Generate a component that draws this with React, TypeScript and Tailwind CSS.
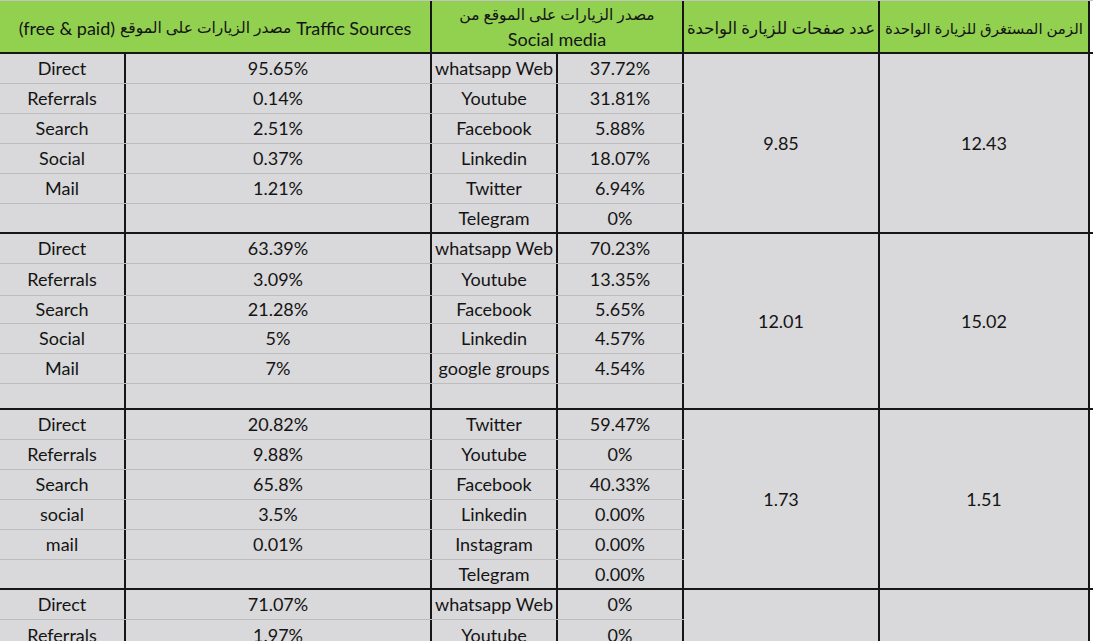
import React from 'react';

type Block = {
  rows: string[][];
  heights: number[];
  pages: string;
  time: string;
};

const BLOCKS: Block[] = [
  {
    rows: [
      ['Direct', '95.65%', 'whatsapp Web', '37.72%'],
      ['Referrals', '0.14%', 'Youtube', '31.81%'],
      ['Search', '2.51%', 'Facebook', '5.88%'],
      ['Social', '0.37%', 'Linkedin', '18.07%'],
      ['Mail', '1.21%', 'Twitter', '6.94%'],
      ['', '', 'Telegram', '0%'],
    ],
    heights: [30, 30, 30, 30, 30, 28],
    pages: '9.85',
    time: '12.43',
  },
  {
    rows: [
      ['Direct', '63.39%', 'whatsapp Web', '70.23%'],
      ['Referrals', '3.09%', 'Youtube', '13.35%'],
      ['Search', '21.28%', 'Facebook', '5.65%'],
      ['Social', '5%', 'Linkedin', '4.57%'],
      ['Mail', '7%', 'google groups', '4.54%'],
      ['', '', '', ''],
    ],
    heights: [30, 32, 28, 30, 30, 24],
    pages: '12.01',
    time: '15.02',
  },
  {
    rows: [
      ['Direct', '20.82%', 'Twitter', '59.47%'],
      ['Referrals', '9.88%', 'Youtube', '0%'],
      ['Search', '65.8%', 'Facebook', '40.33%'],
      ['social', '3.5%', 'Linkedin', '0.00%'],
      ['mail', '0.01%', 'Instagram', '0.00%'],
      ['', '', 'Telegram', '0.00%'],
    ],
    heights: [30, 30, 30, 30, 30, 28],
    pages: '1.73',
    time: '1.51',
  },
  {
    rows: [
      ['Direct', '71.07%', 'whatsapp Web', '0%'],
      ['Referrals', '1.97%', 'Youtube', '0%'],
    ],
    heights: [30, 30],
    pages: '',
    time: '',
  },
];

const WIDTHS = ['w-[126px]', 'w-[306px]', 'w-[126px]', 'w-[126px]'];

function BlockRows({ block }: { block: Block }) {
  return (
    <div className="flex border-b-2 border-[#161616]">
      <div className="flex flex-col">
        {block.rows.map((r, i) => (
          <div
            key={i}
            style={{ height: block.heights[i] }}
            className={`flex ${i < block.rows.length - 1 ? 'border-b border-[#bdbdbd]' : ''}`}
          >
            {r.map((c, j) => (
              <div
                key={j}
                className={`${WIDTHS[j]} flex items-center justify-center whitespace-nowrap border-r-2 border-[#161616]`}
              >
                {c}
              </div>
            ))}
          </div>
        ))}
      </div>
      <div className="flex w-[196px] items-center justify-center border-r-2 border-[#161616]">{block.pages}</div>
      <div className="flex w-[210px] items-center justify-center border-r-2 border-[#161616]">{block.time}</div>
      <div className="flex-1 bg-white" />
    </div>
  );
}

export default function App() {
  return (
    <div className="h-[641px] w-[1093px] overflow-hidden bg-white font-['Lato','DejaVu_Sans',sans-serif] text-[18px] text-[#141414]">
      <div className="bg-[#d9d8da]">
        <div className="flex h-[54px] border-b-2 border-t border-[#161616] border-t-[#c4c4c4] bg-[#92d050]">
          <div className="flex w-[432px] items-center justify-center whitespace-nowrap border-r-2 border-[#161616] pt-[3px]">
            (free &amp; paid) <span className="px-[5px] text-[15.5px]">مصدر الزيارات على الموقع</span> Traffic Sources
          </div>
          <div className="flex w-[252px] flex-col items-center justify-center whitespace-nowrap border-r-2 border-[#161616] leading-[25px]">
            <span dir="rtl" className="text-[15.5px]">
              مصدر الزيارات على الموقع من
            </span>
            <span>Social media</span>
          </div>
          <div
            dir="rtl"
            className="flex w-[196px] items-center justify-center whitespace-nowrap border-r-2 border-[#161616] pt-[3px] text-[16.5px]"
          >
            عدد صفحات للزيارة الواحدة
          </div>
          <div
            dir="rtl"
            className="flex w-[210px] items-center justify-center whitespace-nowrap border-r-2 border-[#161616] pt-[3px] text-[15px]"
          >
            الزمن المستغرق للزيارة الواحدة
          </div>
          <div className="flex-1 bg-white" />
        </div>
        {BLOCKS.map((b, i) => (
          <BlockRows key={i} block={b} />
        ))}
      </div>
    </div>
  );
}
